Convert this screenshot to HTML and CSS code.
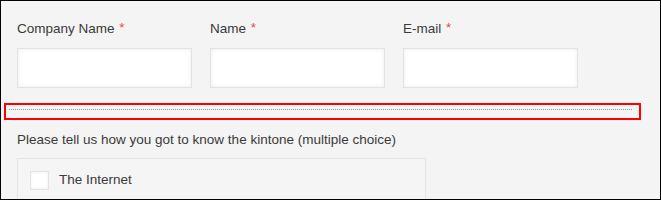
FILE: index.html
```html
<!DOCTYPE html>
<html lang="en">
<head>
    <meta charset="UTF-8">
    <title>kintone form</title>
    <link rel="stylesheet" href="styles.css">
</head>
<body>
    <div class="form">
        <div class="field-row">
            <div class="field">
                <div class="field-label">Company Name <span class="required">*</span></div>
                <input class="text-input" type="text">
            </div>
            <div class="field">
                <div class="field-label">Name <span class="required">*</span></div>
                <input class="text-input" type="text">
            </div>
            <div class="field">
                <div class="field-label">E-mail <span class="required">*</span></div>
                <input class="text-input" type="text">
            </div>
        </div>

        <div class="separator-highlight">
            <div class="separator-line"></div>
        </div>

        <div class="field-label question">Please tell us how you got to know the kintone (multiple choice)</div>
        <div class="choice-group">
            <label class="choice">
                <span class="checkbox"></span>
                <span class="choice-text">The Internet</span>
            </label>
        </div>
    </div>
</body>
</html>
```

FILE: styles.css
```css
body {
    margin: 0;
    font-family: "Liberation Sans", Arial, sans-serif;
    color: #333;
}
.form {
    width: 661px;
    height: 200px;
    box-sizing: border-box;
    border: 1px solid #000;
    background-color: #f4f4f4;
    padding: 18px 0 0 16px;
    overflow: hidden;
}
.field-row {
    display: flex;
    gap: 18px;
}
.field-label {
    font-size: 13.5px;
    line-height: 20px;
    color: #3a3a3a;
}
.required {
    color: #e74c3c;
    margin-left: 1px;
    position: relative;
    top: -1px;
}
.text-input {
    display: block;
    width: 175px;
    height: 40px;
    box-sizing: border-box;
    margin-top: 9px;
    border: 1px solid #e3e3e3;
    background-color: #fff;
    box-shadow: inset 0 0 4px rgba(0,0,0,0.08);
    outline: none;
}
.separator-highlight {
    width: 637px;
    height: 17px;
    box-sizing: border-box;
    margin: 15px 0 0 -13px;
    border: 2px solid #f00;
    padding: 4px 7px 0 3px;
}
.separator-line {
    border-top: 1px dotted #999;
}
.question {
    margin-top: 10px;
}
.choice-group {
    width: 409px;
    height: 60px;
    box-sizing: border-box;
    margin-top: 8px;
    border: 1px solid #e3e3e3;
    background-color: #f5f5f5;
    padding: 11px 12px;
}
.choice {
    display: flex;
    align-items: center;
    gap: 10px;
}
.checkbox {
    width: 19px;
    height: 19px;
    box-sizing: border-box;
    border: 1px solid #e3e3e3;
    background-color: #fff;
    box-shadow: inset 0 0 3px rgba(0,0,0,0.08);
}
.choice-text {
    font-size: 13.5px;
    line-height: 20px;
    color: #3a3a3a;
}
```
